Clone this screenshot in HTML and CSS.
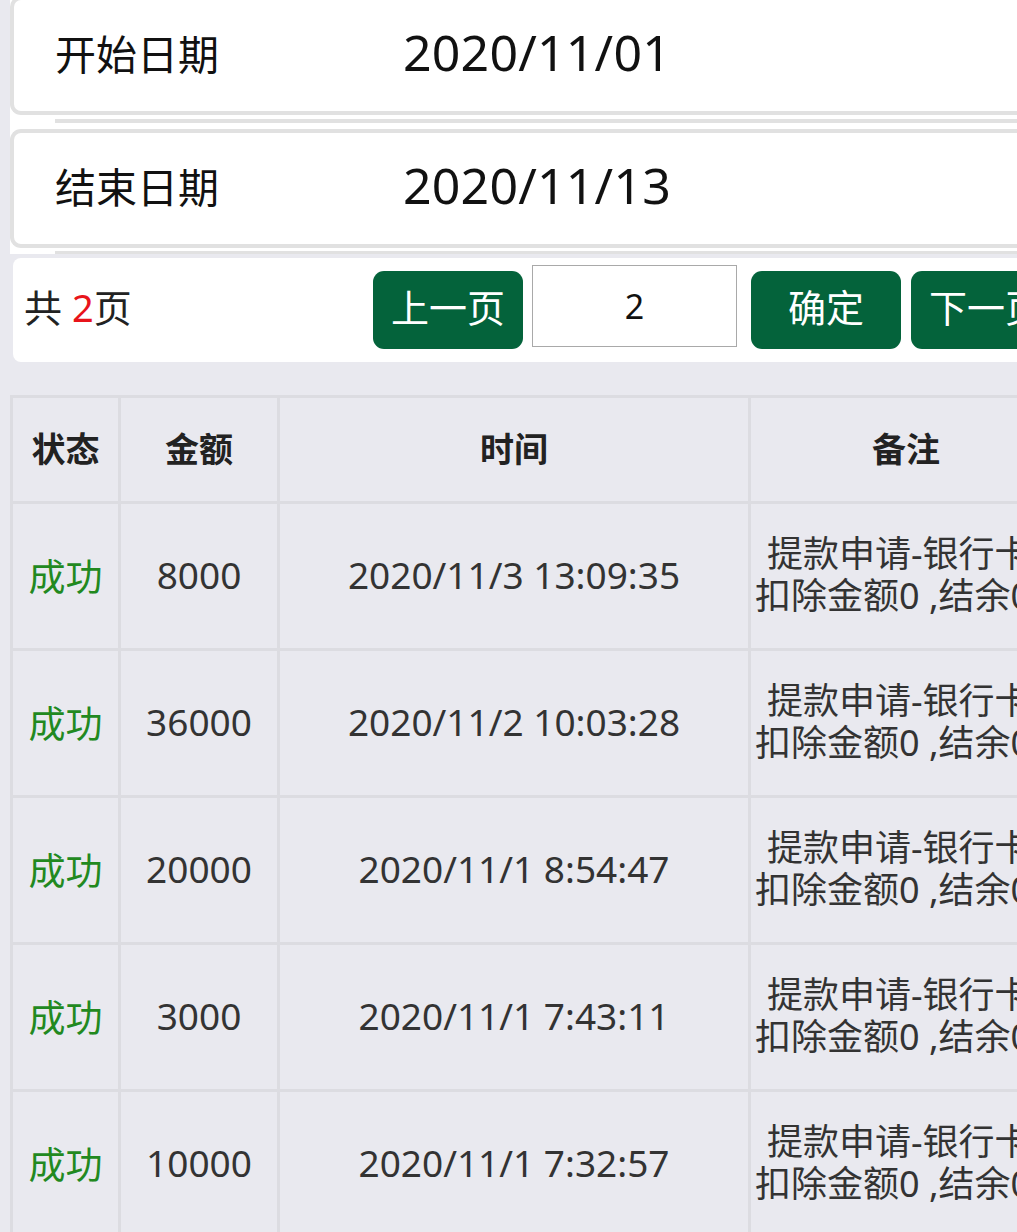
FILE: index.html
```html
<!DOCTYPE html>
<html lang="zh-CN">
<head>
<meta charset="utf-8">
<title>提款记录</title>
<link rel="stylesheet" href="styles.css">
</head>
<body>
<div class="page">
  <div class="form">
    <div class="field">
      <span class="label">开始日期</span>
      <span class="value">2020/11/01</span>
    </div>
    <div class="sep"></div>
    <div class="field">
      <span class="label">结束日期</span>
      <span class="value">2020/11/13</span>
    </div>
    <div class="sep sep-last"></div>
  </div>

  <div class="pager">
    <span class="total">共 <em class="num">2</em>页</span>
    <button class="btn">上一页</button>
    <input class="page-input" type="text" value="2">
    <button class="btn btn-ok">确定</button>
    <button class="btn btn-next">下一页</button>
  </div>

  <div class="grid">
    <div class="cell head">状态</div>
    <div class="cell head">金额</div>
    <div class="cell head">时间</div>
    <div class="cell head">备注</div>

    <div class="cell ok">成功</div>
    <div class="cell">8000</div>
    <div class="cell">2020/11/3 13:09:35</div>
    <div class="cell note"><div class="note-text">提款申请-银行卡<br>扣除金额0 ,结余0</div></div>

    <div class="cell ok">成功</div>
    <div class="cell">36000</div>
    <div class="cell">2020/11/2 10:03:28</div>
    <div class="cell note"><div class="note-text">提款申请-银行卡<br>扣除金额0 ,结余0</div></div>

    <div class="cell ok">成功</div>
    <div class="cell">20000</div>
    <div class="cell">2020/11/1 8:54:47</div>
    <div class="cell note"><div class="note-text">提款申请-银行卡<br>扣除金额0 ,结余0</div></div>

    <div class="cell ok">成功</div>
    <div class="cell">3000</div>
    <div class="cell">2020/11/1 7:43:11</div>
    <div class="cell note"><div class="note-text">提款申请-银行卡<br>扣除金额0 ,结余0</div></div>

    <div class="cell ok">成功</div>
    <div class="cell">10000</div>
    <div class="cell">2020/11/1 7:32:57</div>
    <div class="cell note"><div class="note-text">提款申请-银行卡<br>扣除金额0 ,结余0</div></div>
  </div>
</div>
</body>
</html>
```

FILE: styles.css
```css
html, body {
  margin: 0;
  padding: 0;
  overflow: hidden;
}

body {
  background: #e9e9ef;
  font-family: "Noto Sans", "Noto Sans CJK SC", sans-serif;
  color: #333;
}

.page {
  width: 1400px;
}

/* date form */
.form {
  margin-left: 10px;
  margin-top: -4px;
  background: #fff;
}

.field {
  height: 119px;
  box-sizing: border-box;
  border: 4px solid #e1e1e1;
  border-right: none;
  border-radius: 11px 0 0 11px;
  display: flex;
  align-items: center;
  padding-left: 41px;
  padding-bottom: 8px;
  background: #fff;
}

.label {
  width: 348px;
  font-size: 41px;
  color: #111;
}

.value {
  font-size: 50px;
  color: #111;
  letter-spacing: 0.2px;
}

.sep {
  height: 4px;
  margin: 4px 0 6px 45px;
  background: #e1e1e1;
}

.sep-last {
  height: 3px;
  margin: 3px 0 0 45px;
}

/* pager */
.pager {
  margin: 4px 0 0 13px;
  height: 104px;
  background: #fff;
  border-radius: 8px 0 0 8px;
  display: flex;
  align-items: center;
  padding-left: 11px;
}

.total {
  width: 349px;
  font-size: 38px;
  color: #222;
  padding-bottom: 10px;
}

.num {
  font-style: normal;
  color: #e8141b;
}

.btn {
  width: 150px;
  height: 78px;
  border: none;
  border-radius: 11px;
  background: #04633b;
  color: #fff;
  font-family: "Noto Sans", "Noto Sans CJK SC", sans-serif;
  font-size: 38px;
  padding: 0 0 9px 0;
  flex-shrink: 0;
}

.page-input {
  width: 205px;
  height: 82px;
  box-sizing: border-box;
  border: 1px solid #a9a9a9;
  margin: 0 0 9px 9px;
  text-align: center;
  font-family: "Noto Sans", sans-serif;
  font-size: 34px;
  color: #111;
  padding: 0;
  flex-shrink: 0;
}

.btn-ok {
  margin-left: 14px;
}

.btn-next {
  margin-left: 10px;
}

/* table */
.grid {
  margin: 33px 0 0 10px;
  display: grid;
  grid-template-columns: 108px 159px 471px 313px;
  grid-auto-rows: 147px;
  grid-template-rows: 106px;
  border-left: 3px solid #dcdce1;
  border-top: 3px solid #dcdce1;
  width: max-content;
}

.cell {
  box-sizing: border-box;
  border-right: 3px solid #dcdce1;
  border-bottom: 3px solid #dcdce1;
  display: flex;
  align-items: center;
  justify-content: center;
  font-size: 37px;
  color: #333;
  background: #e9e9ef;
  white-space: nowrap;
  padding-bottom: 3px;
}

.head {
  font-weight: bold;
  font-size: 34px;
  color: #222;
  padding-bottom: 4px;
}

.ok {
  color: #22891f;
}

.note {
  justify-content: flex-start;
  padding-left: 4px;
}

.note-text {
  font-size: 36px;
  line-height: 42px;
  text-indent: 12px;
}
```
